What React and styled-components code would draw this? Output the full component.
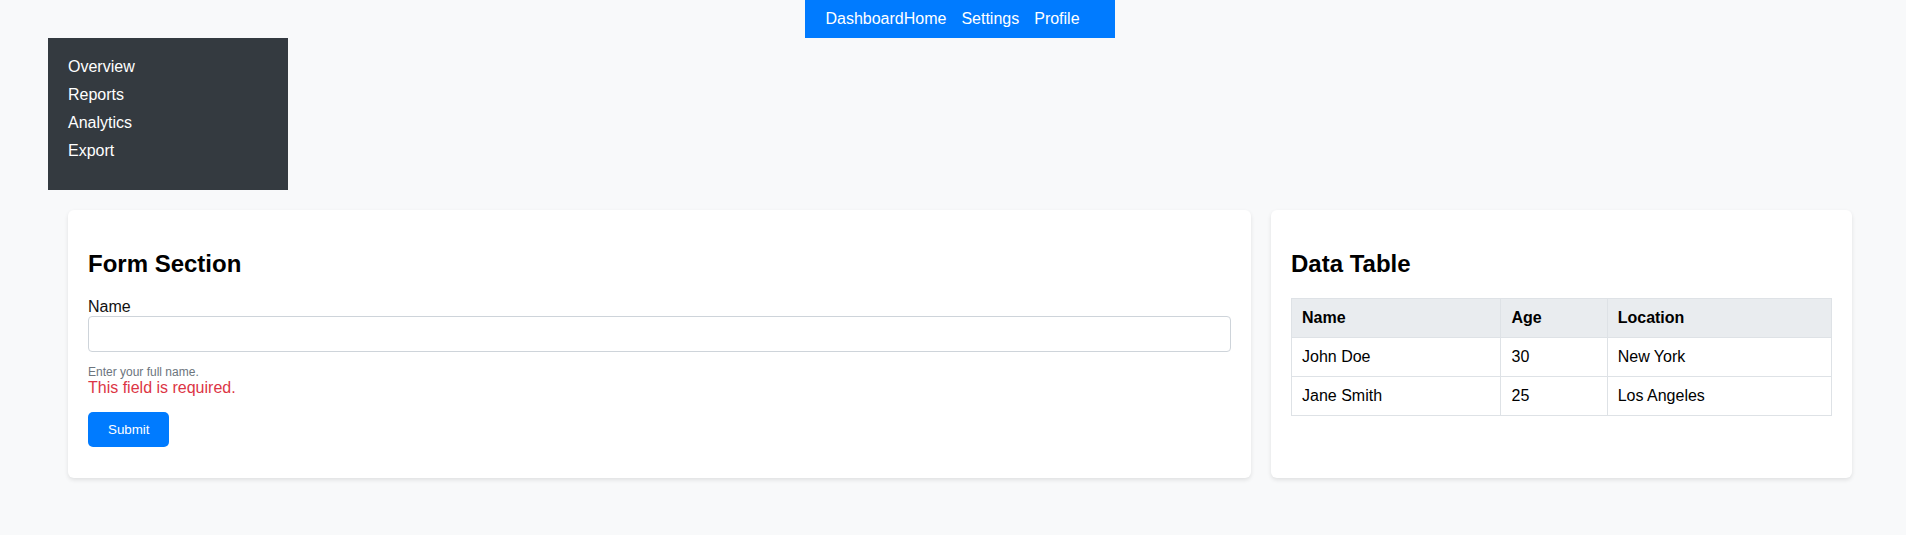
import React from "react";
import styled, { createGlobalStyle } from "styled-components";

const GlobalStyle = createGlobalStyle`
  html, body {
    margin: 0;
    padding: 0;
    background: #f8f9fa;
    font-family: "Liberation Sans", Arial, sans-serif;
    font-size: 16px;
    color: #000;
  }
  * { box-sizing: border-box; }
`;

const Page = styled.div`
  display: flex;
  flex-direction: column;
  min-height: 535px;
`;

const TopBar = styled.header`
  display: flex;
  justify-content: center;
  padding-left: 14px;
`;

const Nav = styled.nav`
  display: flex;
  align-items: center;
  background: #007bff;
  color: #fff;
  padding: 10px 20px;
  line-height: 18px;
`;

const Brand = styled.span`
  color: #fff;
`;

const NavLink = styled.a`
  color: #fff;
  text-decoration: none;
  margin-right: 15px;
`;

const Sidebar = styled.aside`
  margin-left: 48px;
  width: 240px;
  background: #343a40;
  padding: 20px;
`;

const SideList = styled.ul`
  list-style: none;
  margin: 0;
  padding: 0;
`;

const SideItem = styled.li`
  color: #fff;
  line-height: 18px;
  margin-bottom: 10px;
`;

const Main = styled.main`
  display: grid;
  grid-template-columns: 1183fr 581fr;
  gap: 20px;
  margin: 20px 54px 0 68px;
`;

const Card = styled.section`
  background: #fff;
  border-radius: 6px;
  box-shadow: 0 2px 4px rgba(0, 0, 0, 0.1);
  padding: 20px;
`;

const Title = styled.h2`
  font-size: 24px;
  font-weight: bold;
  margin: 20px 0;
  line-height: 28px;
  color: #000;
`;

const Label = styled.label`
  display: block;
  line-height: 18px;
  color: #111;
`;

const Input = styled.input`
  display: block;
  width: 100%;
  height: 36px;
  padding: 8px;
  border: 1px solid #ced4da;
  border-radius: 4px;
  font-family: inherit;
  font-size: 16px;
  margin: 0 0 13px 0;
`;

const Hint = styled.small`
  display: block;
  font-size: 12px;
  line-height: 14px;
  color: #6c757d;
`;

const ErrorText = styled.div`
  color: #dc3545;
  line-height: 18px;
`;

const Button = styled.button`
  display: block;
  margin: 15px 0 11px;
  background: #007bff;
  color: #fff;
  border: none;
  border-radius: 5px;
  padding: 10px 20px;
  font-family: "Liberation Sans", Arial, sans-serif;
  font-size: 13.333px;
  line-height: 15px;
  cursor: pointer;
`;

const Table = styled.table`
  width: 100%;
  border-collapse: collapse;
`;

const Th = styled.th`
  background: #e9ecef;
  border: 1px solid #dee2e6;
  padding: 10px;
  text-align: left;
  font-weight: bold;
  line-height: 18px;
`;

const Td = styled.td`
  border: 1px solid #dee2e6;
  padding: 10px;
  line-height: 18px;
`;

const rows = [
  { name: "John Doe", age: 30, location: "New York" },
  { name: "Jane Smith", age: 25, location: "Los Angeles" },
];

export default function App() {
  return (
    <Page>
      <GlobalStyle />
      <TopBar>
        <Nav>
          <Brand>Dashboard</Brand>
          <NavLink href="#">Home</NavLink>
          <NavLink href="#">Settings</NavLink>
          <NavLink href="#">Profile</NavLink>
        </Nav>
      </TopBar>
      <Sidebar>
        <SideList>
          <SideItem>Overview</SideItem>
          <SideItem>Reports</SideItem>
          <SideItem>Analytics</SideItem>
          <SideItem>Export</SideItem>
        </SideList>
      </Sidebar>
      <Main>
        <Card>
          <Title>Form Section</Title>
          <form onSubmit={(e) => e.preventDefault()}>
            <Label htmlFor="name">Name</Label>
            <Input id="name" type="text" />
            <Hint>Enter your full name.</Hint>
            <ErrorText>This field is required.</ErrorText>
            <Button type="submit">Submit</Button>
          </form>
        </Card>
        <Card>
          <Title>Data Table</Title>
          <Table>
            <thead>
              <tr>
                <Th>Name</Th>
                <Th>Age</Th>
                <Th>Location</Th>
              </tr>
            </thead>
            <tbody>
              {rows.map((r) => (
                <tr key={r.name}>
                  <Td>{r.name}</Td>
                  <Td>{r.age}</Td>
                  <Td>{r.location}</Td>
                </tr>
              ))}
            </tbody>
          </Table>
        </Card>
      </Main>
    </Page>
  );
}
